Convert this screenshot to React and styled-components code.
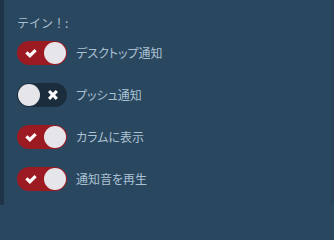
import { useState } from "react";
import styled, { createGlobalStyle } from "styled-components";

const GlobalStyle = createGlobalStyle`
  html, body {
    margin: 0;
    padding: 0;
    background: #2a4760;
  }
  body {
    font-family: "Noto Sans CJK JP", "Noto Sans", sans-serif;
  }
`;

const Page = styled.div`
  display: flex;
  width: 334px;
  height: 205px;
  overflow: hidden;
  background: #2a4760;
`;

const Edge = styled.div`
  width: 4px;
  flex-shrink: 0;
  background: #1f3448;
`;

const Panel = styled.div`
  flex: 1;
  padding: 15px 0 0 13px;
  border-right: 3px solid #284259;
`;

const Heading = styled.div`
  font-size: 12px;
  line-height: 16px;
  color: #a9bfd0;
  margin-bottom: 10px;
`;

const List = styled.div`
  display: flex;
  flex-direction: column;
  gap: 18px;
`;

const Row = styled.label`
  display: flex;
  align-items: center;
  gap: 9px;
  cursor: pointer;
`;

const Track = styled.div`
  position: relative;
  width: 50px;
  height: 24px;
  border-radius: 30px;
  flex-shrink: 0;
  background: ${(p) => (p.$on ? "#9c1a22" : "#1b2d3d")};
`;

const Thumb = styled.div`
  position: absolute;
  top: 1px;
  left: ${(p) => (p.$on ? "27px" : "1px")};
  width: 22px;
  height: 22px;
  border-radius: 50%;
  background: #e6e6ea;
`;

const Mark = styled.svg`
  position: absolute;
  top: 0;
  bottom: 0;
  margin: auto 0;
`;

const Label = styled.span`
  font-size: 12px;
  line-height: 16px;
  color: #acc2d3;
  font-feature-settings: "palt";
`;

const Check = () => (
  <Mark width="12" height="9" viewBox="0 0 14 11" style={{ left: 8 }}>
    <path
      d="M11.26 0L5.68 5.58 2.73 2.63 0 5.35l5.68 5.65L14 2.73z"
      fill="#fff"
    />
  </Mark>
);

const Cross = () => (
  <Mark width="10" height="10" viewBox="0 0 10 10" style={{ right: 9 }}>
    <path
      d="M9.9 2.12L7.78 0 4.95 2.83 2.12 0 0 2.12l2.83 2.83L0 7.78 2.12 9.9l2.83-2.83 2.83 2.83 2.12-2.12-2.83-2.83z"
      fill="#fff"
    />
  </Mark>
);

const Toggle = ({ on, onChange }) => (
  <Track $on={on} onClick={onChange}>
    {on ? <Check /> : <Cross />}
    <Thumb $on={on} />
  </Track>
);

const App = () => {
  const [items, setItems] = useState([
    { key: "desktop", label: "デスクトップ通知", on: true },
    { key: "push", label: "プッシュ通知", on: false },
    { key: "column", label: "カラムに表示", on: true },
    { key: "sound", label: "通知音を再生", on: true },
  ]);

  const flip = (key) =>
    setItems(items.map((i) => (i.key === key ? { ...i, on: !i.on } : i)));

  return (
    <>
      <GlobalStyle />
      <Page>
        <Edge />
        <Panel>
          <Heading>テイン！:</Heading>
          <List>
            {items.map((item) => (
              <Row key={item.key}>
                <Toggle on={item.on} onChange={() => flip(item.key)} />
                <Label>{item.label}</Label>
              </Row>
            ))}
          </List>
        </Panel>
      </Page>
    </>
  );
};

export default App;
